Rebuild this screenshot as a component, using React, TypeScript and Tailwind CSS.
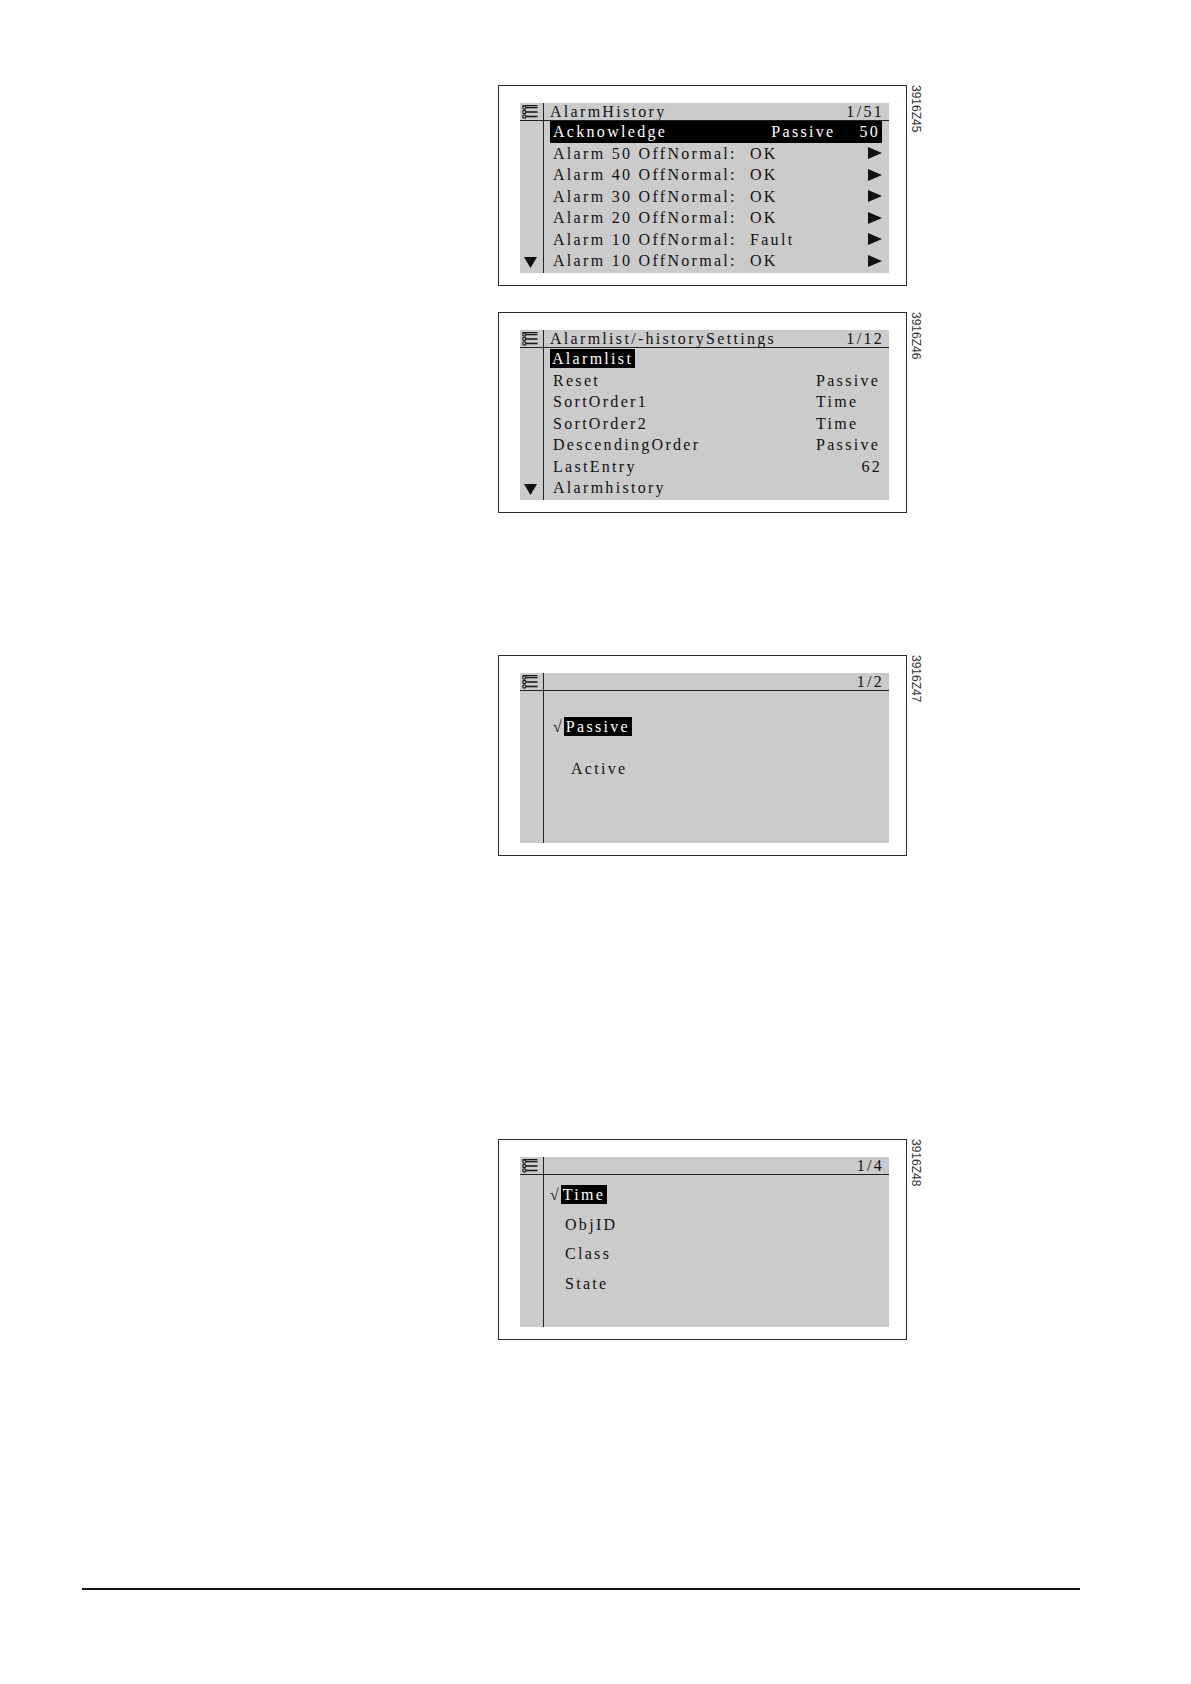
import { ReactNode } from 'react';

const lcd = "font-['Liberation_Serif',serif] text-[16px] tracking-[2.3px] text-[#111]";

function MenuIcon() {
  return (
    <svg width="16" height="14" viewBox="0 0 16 14" className="text-[#1a1a1a]">
      {[2.5, 7, 11.5].map((y) => (
        <g key={y}>
          <circle cx="2.3" cy={y} r="1.6" fill="none" stroke="currentColor" strokeWidth="1.2" />
          <line x1="4" y1={y} x2="15.5" y2={y} stroke="currentColor" strokeWidth="1.6" />
        </g>
      ))}
      <line x1="0.5" y1="0.5" x2="15.5" y2="0.5" stroke="currentColor" strokeWidth="1" />
    </svg>
  );
}

function ArrowRight() {
  return (
    <svg width="14" height="12" viewBox="0 0 14 12">
      <polygon points="0,0 14,6 0,12" fill="#111" />
    </svg>
  );
}

function ArrowDown() {
  return (
    <svg width="13" height="11" viewBox="0 0 13 11">
      <polygon points="0,0 13,0 6.5,11" fill="#111" />
    </svg>
  );
}

interface ScreenProps {
  title?: string;
  page: string;
  code: string;
  more?: boolean;
  children: ReactNode;
  className?: string;
}

function Screen({ title, page, code, more, children, className = '' }: ScreenProps) {
  return (
    <div className={`flex items-start ${className}`}>
      <div className="h-[201px] w-[409px] border border-[#2a2a2a] bg-white pl-[21px] pr-[17px] pt-[17px]">
        <div className={`flex h-[170px] flex-col bg-[#cbcbcb] ${lcd}`}>
          {/* Header */}
          <div className="flex h-[18px] border-b border-[#222]">
            <div className="flex w-[24px] items-center justify-center border-r border-[#222] pr-[3px]">
              <MenuIcon />
            </div>
            <div className="flex flex-1 items-end pl-[6px] pr-[5px] leading-[17px]">
              <span>{title}</span>
              <span className="ml-auto">{page}</span>
            </div>
          </div>
          {/* Body */}
          <div className="flex flex-1">
            <div className="flex w-[24px] flex-col items-center justify-end border-r border-[#222] pb-[5px] pr-[3px]">
              {more && <ArrowDown />}
            </div>
            <div className="flex-1 pl-[6px] pr-[7px]">{children}</div>
          </div>
        </div>
      </div>
      <div className="ml-[2px] font-['Liberation_Sans',sans-serif] text-[12px] leading-[13px] text-[#333] [writing-mode:vertical-rl]">
        {code}
      </div>
    </div>
  );
}

const alarms = [
  ['Alarm 50 OffNormal:', 'OK'],
  ['Alarm 40 OffNormal:', 'OK'],
  ['Alarm 30 OffNormal:', 'OK'],
  ['Alarm 20 OffNormal:', 'OK'],
  ['Alarm 10 OffNormal:', 'Fault'],
  ['Alarm 10 OffNormal:', 'OK'],
];

const settings: [string, string, boolean?][] = [
  ['Reset', 'Passive'],
  ['SortOrder1', 'Time'],
  ['SortOrder2', 'Time'],
  ['DescendingOrder', 'Passive'],
  ['LastEntry', '62', true],
];

export default function App() {
  return (
    <div className="min-h-[1684px] w-[1191px] bg-white">
      <div className="flex flex-col pl-[498px] pt-[85px]">
        <Screen title="AlarmHistory" page="1/51" code="3916Z45" more>
          <div className="flex h-[21.5px] items-center bg-black pl-[3px] pr-[2px] leading-[21px] text-white">
            <span>Acknowledge</span>
            <span className="ml-auto mr-[24px]">Passive</span>
            <span>50</span>
          </div>
          {alarms.map(([label, value], i) => (
            <div key={i} className="flex h-[21.5px] items-center pl-[3px] leading-[21px]">
              <span className="w-[197px]">{label}</span>
              <span>{value}</span>
              <span className="ml-auto">
                <ArrowRight />
              </span>
            </div>
          ))}
        </Screen>

        <Screen title="Alarmlist/-historySettings" page="1/12" code="3916Z46" more className="mt-[26px]">
          <div className="flex h-[21.5px] items-center leading-[21px]">
            <span className="bg-black px-[2px] leading-[19px] text-white">Alarmlist</span>
          </div>
          {settings.map(([label, value, right]) => (
            <div key={label} className="flex h-[21.5px] items-center pl-[3px] leading-[21px]">
              <span className="flex-1">{label}</span>
              <span className={`w-[66px] ${right ? 'text-right' : ''}`}>{value}</span>
            </div>
          ))}
          <div className="flex h-[21.5px] items-center pl-[3px] leading-[21px]">Alarmhistory</div>
        </Screen>

        <Screen page="1/2" code="3916Z47" className="mt-[142px]">
          <div className="pt-[25px]">
            <div className="flex h-[21px] items-center pl-[3px] leading-[21px]">
              <span className="tracking-normal">√</span>
              <span className="ml-[2px] bg-black px-[2px] leading-[19px] text-white">Passive</span>
            </div>
            <div className="mt-[21px] flex h-[21px] items-center pl-[21px] leading-[21px]">Active</div>
          </div>
        </Screen>

        <Screen page="1/4" code="3916Z48" className="mt-[283px]">
          <div className="pt-[5px]">
            <div className="flex h-[29.5px] items-center leading-[21px]">
              <span className="tracking-normal">√</span>
              <span className="ml-[2px] bg-black px-[2px] leading-[19px] text-white">Time</span>
            </div>
            {['ObjID', 'Class', 'State'].map((s) => (
              <div key={s} className="flex h-[29.5px] items-center pl-[15px] leading-[21px]">
                {s}
              </div>
            ))}
          </div>
        </Screen>
      </div>

      {/* Footer rule */}
      <div className="ml-[82px] mt-[248px] h-[1.5px] w-[998px] bg-[#111]" />
    </div>
  );
}
